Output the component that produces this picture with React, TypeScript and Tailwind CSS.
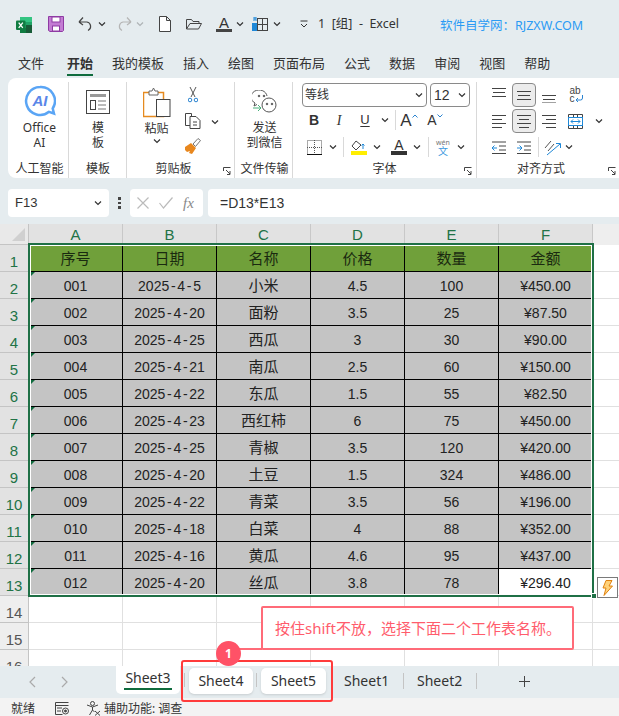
import { ReactNode } from "react"

const rows = [
  ["001", "2025-4-5", "小米", "4.5", "100", "¥450.00"],
  ["002", "2025-4-20", "面粉", "3.5", "25", "¥87.50"],
  ["003", "2025-4-25", "西瓜", "3", "30", "¥90.00"],
  ["004", "2025-4-21", "南瓜", "2.5", "60", "¥150.00"],
  ["005", "2025-4-22", "东瓜", "1.5", "55", "¥82.50"],
  ["006", "2025-4-23", "西红柿", "6", "75", "¥450.00"],
  ["007", "2025-4-25", "青椒", "3.5", "120", "¥420.00"],
  ["008", "2025-4-20", "土豆", "1.5", "324", "¥486.00"],
  ["009", "2025-4-22", "青菜", "3.5", "56", "¥196.00"],
  ["010", "2025-4-18", "白菜", "4", "88", "¥352.00"],
  ["011", "2025-4-16", "黄瓜", "4.6", "95", "¥437.00"],
  ["012", "2025-4-20", "丝瓜", "3.8", "78", "¥296.40"],
]

const heads = ["序号", "日期", "名称", "价格", "数量", "金额"]
const tabs = ["文件", "开始", "我的模板", "插入", "绘图", "页面布局", "公式", "数据", "审阅", "视图", "帮助"]

function Chev({ className = "" }: { className?: string }) {
  return (
    <svg width="8" height="6" viewBox="0 0 8 6" className={"shrink-0 " + className} fill="none" stroke="#333" strokeWidth="1.2">
      <path d="M1 1.5 4 4.5 7 1.5" />
    </svg>
  )
}

function Slot({ w, children }: { w: number; children: ReactNode }) {
  return (
    <div className="flex items-center justify-center shrink-0 h-full" style={{ width: w }}>
      {children}
    </div>
  )
}

function Lines({ kind }: { kind: "top" | "mid" | "bottom" | "left" | "center" | "right" }) {
  const sets: Record<string, [number, number, number][]> = {
    top: [[0, 14, 1], [1, 13, 5], [0, 14, 9]],
    mid: [[0, 14, 4], [1, 13, 8], [0, 14, 12]],
    bottom: [[0, 14, 8], [1, 13, 12], [0, 14, 15.5]],
    left: [[0, 14, 2], [0, 10, 6], [0, 14, 10], [0, 10, 14]],
    center: [[0, 14, 2], [2, 12, 6], [0, 14, 10], [2, 12, 14]],
    right: [[0, 14, 2], [4, 14, 6], [0, 14, 10], [4, 14, 14]],
  }
  return (
    <svg width="14" height="16" viewBox="0 0 14 16" stroke="#444" strokeWidth="1">
      {sets[kind].map(([a, b, y], i) => (
        <line key={i} x1={a} x2={b} y1={y + 0.5} y2={y + 0.5} />
      ))}
    </svg>
  )
}

function Launcher({ className = "" }: { className?: string }) {
  return (
    <svg width="8" height="8" viewBox="0 0 8 8" className={"absolute " + className} fill="none" stroke="#444" strokeWidth="1">
      <path d="M.5 4V.5H7.5M3 3l4 4M7 4v3.5H4" />
    </svg>
  )
}

function Group({ w, label, labelClass = "", children, last }: { w: number; label: string; labelClass?: string; children: ReactNode; last?: boolean }) {
  return (
    <div className={"relative flex flex-col shrink-0 h-full " + (last ? "" : "border-r border-[#d9d9d9]")} style={{ width: w }}>
      <div className="flex-1 min-h-0">{children}</div>
      <div className={"h-[17px] text-center text-[12px] leading-[16px] text-[#333] " + labelClass}>{label}</div>
    </div>
  )
}

function TitleBar() {
  return (
    <div className="flex items-center h-[48px] pl-[16px] text-[#333] shrink-0">
      <svg width="16" height="16" viewBox="0 0 16 16" className="mt-[1px]">
        <rect x="4" width="12" height="16" rx="1.5" fill="#21a366" />
        <rect x="4" width="12" height="5" fill="#33c481" />
        <rect x="10" y="8" width="6" height="8" fill="#185c37" />
        <rect x="4" y="11" width="6" height="5" fill="#107c41" />
        <rect y="3.5" width="9.5" height="9.5" rx="1" fill="#107c41" />
        <path d="M2.7 5.7 6.8 10.8M6.8 5.7 2.7 10.8" stroke="#fff" strokeWidth="1.3" />
      </svg>
      <svg width="16" height="16" viewBox="0 0 16 16" className="ml-[16px]" fill="none">
        <path d="M.5.5h15v14l-1 1H2l-1.500-1z" fill="#c37cd3" stroke="#8e3aa3" />
        <rect x="4" y="1" width="8" height="5" fill="#fff" stroke="#8e3aa3" />
        <rect x="4.500" y="10" width="7" height="5" fill="#fff" stroke="#8e3aa3" />
      </svg>
      <svg width="15" height="16" viewBox="0 0 15 16" className="ml-[14px]" fill="none" stroke="#444" strokeWidth="1.2">
        <path d="M1 6h8a4.500 4.500 0 0 1 1 8.500M1 6l4-4.500M1 6l4 3" />
      </svg>
      <Chev className="ml-[5px]" />
      <svg width="15" height="16" viewBox="0 0 15 16" className="ml-[11px]" fill="none" stroke="#b5b5b5" strokeWidth="1.2">
        <path d="M14 6H6a4.500 4.500 0 0 0-1 8.500M14 6l-4-4.500M14 6l-4 3" />
      </svg>
      <Chev className="ml-[4px] opacity-30" />
      <svg width="12" height="16" viewBox="0 0 12 16" className="ml-[15px]" fill="#fff" stroke="#444">
        <path d="M.5.5h7l4 4v11H.5zM7.500.5v4h4" />
      </svg>
      <svg width="16" height="12" viewBox="0 0 16 12" className="ml-[15px]" fill="none" stroke="#444">
        <path d="M.5 11V1.500h5l1.500 2h6v2M.5 11h12l3-5.500H4z" />
      </svg>
      <div className="ml-[14px] flex flex-col items-center w-[16px]">
        <span className="text-[15px] leading-[13px] font-['Liberation_Sans',sans-serif]">A</span>
        <span className="block h-[3px] w-[16px] bg-[#444]" />
      </div>
      <Chev className="ml-[4px]" />
      <svg width="16" height="14" viewBox="0 0 16 14" className="ml-[8px]" fill="none">
        <rect x="5.500" y="1.500" width="10" height="12" stroke="#444" />
        <path d="M10.500 1.500v12M5.500 7.500h10" stroke="#444" />
        <rect x="0" y="6" width="5" height="8" fill="#1e88d8" />
        <path d="M1 1h4M3 0v3M1 3h4" stroke="#1e88d8" />
      </svg>
      <Chev className="ml-[5px]" />
      <svg width="8" height="8" viewBox="0 0 8 8" className="ml-[19px]" fill="none" stroke="#333">
        <path d="M.5 1h7M1 4l3 3 3-3" />
      </svg>
      <span className="ml-[10px] text-[12.500px] whitespace-pre leading-none">1  [组]  -  Excel</span>
      <span className="ml-[41px] mt-[5px] text-[12.500px] text-[#2b9bf4] whitespace-nowrap leading-none">软件自学网：RJZXW.COM</span>
    </div>
  )
}

function MenuBar() {
  return (
    <div className="flex h-[30px] pl-[18px] gap-[19px] shrink-0">
      {tabs.map((t) => (
        <div key={t} className={"relative text-[13px] leading-[30px] text-[#333] whitespace-nowrap " + (t === "开始" ? "ml-[4px]" : "")}>
          <span className={t === "开始" ? "font-bold" : ""}>{t}</span>
          {t === "开始" && <span className="absolute left-0 right-0 bottom-[2px] h-[2px] bg-[#0f6b3d]" />}
        </div>
      ))}
    </div>
  )
}

function Ribbon() {
  return (
    <div className="ml-[8px] h-[100px] bg-white rounded-l-[8px] flex pt-[4px] shrink-0 text-[#333]">
      <Group w={61} label="人工智能" labelClass="pl-[3px]">
        <div className="flex flex-col items-center pt-[3px] pl-[3px]">
          <svg width="32" height="32" viewBox="0 0 32 32">
            <path d="M16 2a14 14 0 1 0 9 24.800l5 1.700-1.300-5A14 14 0 0 0 16 2z" fill="#fff" stroke="#5aa5f5" strokeWidth="2.500" />
            <text x="16" y="21" textAnchor="middle" fontSize="15" fontWeight="700" fontStyle="italic" fill="#5a86e8" fontFamily="Liberation Sans, sans-serif">AI</text>
          </svg>
          <div className="text-[12px] leading-[15px] mt-[3px] text-center">Office<br />AI</div>
        </div>
      </Group>
      <Group w={58} label="模板" labelClass="pl-[1px]">
        <div className="flex flex-col items-center pt-[8px] pl-[1px]">
          <svg width="24" height="24" viewBox="0 0 24 24" fill="none" stroke="#444">
            <rect x=".5" y=".5" width="23" height="23" />
            <rect x="4" y="4" width="16" height="3" fill="#999" stroke="none" />
            <rect x="4.500" y="10.500" width="5" height="9" />
            <path d="M12 11h8M12 15h8M12 19h8" stroke="#777" />
          </svg>
          <div className="text-[12px] leading-[15px] mt-[6px] text-center">模<br />板</div>
        </div>
      </Group>
      <Group w={108} label="剪贴板" labelClass="pr-[14px]">
        <div className="flex h-full">
          <div className="flex flex-col items-center w-[54px] pt-[5px] pl-[5px]">
            <svg width="28" height="31" viewBox="0 0 28 31" fill="none">
              <rect x=".5" y="5.500" width="20" height="24" fill="#fff" stroke="#e58a1f" strokeWidth="1.500" />
              <path d="M6 8V4h3l1.500-3 1.500 3h3v4z" fill="#fff" stroke="#666" />
              <rect x="13.500" y="12.500" width="13.500" height="17" fill="#fff" stroke="#444" />
            </svg>
            <div className="text-[12px] leading-[15px] mt-[3px]">粘贴</div>
            <Chev className="mt-[2px]" />
          </div>
          <div className="flex flex-col items-center w-[24px]">
            <svg width="10" height="16" viewBox="0 0 10 16" fill="none" stroke="#555" className="mt-[5px]">
              <path d="M2 0l5 10M8 0 3 10" />
              <circle cx="2" cy="13" r="1.800" stroke="#2a83d0" />
              <circle cx="8" cy="13" r="1.800" stroke="#2a83d0" />
            </svg>
            <svg width="16" height="16" viewBox="0 0 16 16" fill="none" stroke="#444" className="mt-[10px]">
              <path d="M5 12.500H.5V.5h6v3M5 3.500h6l4 4v8H5z" />
              <path d="M8 9h4M8 12h4" />
            </svg>
            <svg width="16" height="16" viewBox="0 0 16 16" className="mt-[9px]">
              <path d="M0 9l6-4 5 5-4 6-3-1 1-2-3 1-2-2z" fill="#e8871e" />
              <path d="M8 6l5-5.500 2.500 2-5 6z" fill="#fff" stroke="#777" />
            </svg>
          </div>
          <div className="pt-[37px] pl-[6px]"><Chev /></div>
        </div>
        <Launcher className="right-[3px] bottom-[3px]" />
      </Group>
      <Group w={58} label="文件传输" labelClass="pl-[2px]">
        <div className="flex flex-col items-center pt-[8px] pl-[2px]">
          <svg width="26" height="24" viewBox="0 0 26 24" fill="none" stroke="#555">
            <path d="M15 6a8 7 0 1 0-12 7l-1 3 3-1.500" />
            <circle cx="17" cy="15" r="7" fill="#fff" />
            <circle cx="7" cy="6" r=".8" fill="#555" />
            <circle cx="12" cy="6" r=".8" fill="#555" />
            <circle cx="15" cy="14" r=".8" fill="#555" />
            <circle cx="20" cy="14" r=".8" fill="#555" />
            <path d="M1 18h8M6 15l3 3-3 3" stroke="#48b07a" />
          </svg>
          <div className="text-[12px] leading-[15px] mt-[6px] text-center whitespace-nowrap">发送<br />到微信</div>
        </div>
      </Group>
      <Group w={184} label="字体">
        <div className="flex flex-col pl-[9px] pt-[1px]">
          <div className="flex h-[24px] gap-[3px]">
            <div className="w-[125px] border border-[#8a8a8a] rounded-[4px] flex items-center justify-between pl-[2px] pr-[3px] text-[12px]">
              <span>等线</span><Chev />
            </div>
            <div className="w-[40px] border border-[#8a8a8a] rounded-[4px] flex items-center justify-between pl-[3px] pr-[3px] text-[14px] font-['Liberation_Sans',sans-serif]">
              <span>12</span><Chev />
            </div>
          </div>
          <div className="flex items-center h-[26px] font-['Liberation_Sans',sans-serif]">
            <Slot w={24}><b className="text-[14px]">B</b></Slot>
            <Slot w={26}><i className="text-[14px] font-['Liberation_Serif',serif]">I</i></Slot>
            <Slot w={26}><span className="text-[13px] underline underline-offset-2">U</span></Slot>
            <Slot w={14}><Chev /></Slot>
            <div className="w-px h-[20px] bg-[#d9d9d9] ml-[3px]" />
            <Slot w={26}>
              <span className="text-[17px] leading-none">A</span>
              <svg width="6" height="4" viewBox="0 0 6 4" fill="none" stroke="#2a83d0" className="mb-[8px]"><path d="M.5 3.500 3 1l2.500 2.500" /></svg>
            </Slot>
            <Slot w={26}>
              <span className="text-[14px] leading-none">A</span>
              <svg width="6" height="4" viewBox="0 0 6 4" fill="none" stroke="#2a83d0" className="mb-[8px]"><path d="M.5.500 3 3 5.500.5" /></svg>
            </Slot>
          </div>
          <div className="flex items-center h-[28px]">
            <Slot w={24}>
              <svg width="15" height="15" viewBox="0 0 15 15" fill="none" stroke="#555" strokeDasharray="1 1">
                <rect x=".5" y=".5" width="14" height="14" />
                <path d="M7.500 0v15M0 7.500h15" />
                <path d="M0 14.500h15" stroke="#111" strokeDasharray="none" />
              </svg>
            </Slot>
            <Slot w={14}><Chev /></Slot>
            <div className="w-px h-[20px] bg-[#d9d9d9] ml-[3px]" />
            <Slot w={29}>
              <div className="flex flex-col items-center">
                <svg width="15" height="11" viewBox="0 0 15 11" fill="none" stroke="#444">
                  <path d="M5 1 1 6l4 4 5-5z" />
                  <path d="M12 9V4M10.500 5.500 12 4l1.500 1.500" stroke="#1e88d8" />
                </svg>
                <span className="block w-[16px] h-[4px] bg-[#ffee00]" />
              </div>
            </Slot>
            <Slot w={8}><Chev /></Slot>
            <div className="ml-[9px] w-[18px] flex flex-col items-center">
              <span className="text-[14px] leading-[12px] font-['Liberation_Sans',sans-serif]">A</span>
              <span className="block w-[16px] h-[4px] bg-[#333]" />
            </div>
            <Slot w={18}><Chev /></Slot>
            <div className="w-px h-[20px] bg-[#d9d9d9] ml-[2px]" />
            <Slot w={28}>
              <div className="flex flex-col items-center leading-none">
                <span className="text-[7px] text-[#777]">wén</span>
                <span className="text-[10px] text-[#3d9ae0]">文</span>
              </div>
            </Slot>
            <Slot w={8}><Chev /></Slot>
          </div>
        </div>
        <Launcher className="right-[4px] bottom-[3px]" />
      </Group>
      <Group w={142} label="对齐方式" labelClass="pr-[14px]" last>
        <div className="flex flex-col pl-[12px] pt-[1px]">
          <div className="flex items-center h-[24px]">
            <Slot w={19}><Lines kind="top" /></Slot>
            <div className="ml-[4px] w-[24px] h-[24px] rounded-[4px] bg-[#ececec] border border-[#8a8a8a] flex items-center justify-center"><Lines kind="mid" /></div>
            <Slot w={26}><Lines kind="bottom" /></Slot>
            <Slot w={30}>
              <div className="flex flex-col w-[15px] text-[10px] leading-[8px] text-[#444] font-['Liberation_Sans',sans-serif]">
                <span>ab</span>
                <div className="flex items-center">
                  <span>c</span>
                  <svg width="9" height="8" viewBox="0 0 9 8" fill="none" stroke="#2a83d0"><path d="M7.500 0v3a2 2 0 0 1-2 2H1M3 3 1 5l2 2" /></svg>
                </div>
              </div>
            </Slot>
          </div>
          <div className="flex items-center h-[24px] mt-[2px]">
            <Slot w={19}><Lines kind="left" /></Slot>
            <div className="ml-[4px] w-[24px] h-[24px] rounded-[4px] bg-[#ececec] border border-[#8a8a8a] flex items-center justify-center"><Lines kind="center" /></div>
            <Slot w={26}><Lines kind="right" /></Slot>
            <Slot w={26}>
              <svg width="15" height="15" viewBox="0 0 15 15" fill="none">
                <path d="M.5.5h14v14H.5zM5.500 0v3M9.500 0v3M5.500 12v3M9.500 12v3" stroke="#444" />
                <rect x=".5" y="3.500" width="14" height="8" stroke="#1e88d8" fill="#fff" />
                <path d="M3 7.500h9M5 5.500l-2 2 2 2M10 5.500l2 2-2 2" stroke="#1e88d8" />
              </svg>
            </Slot>
            <Slot w={22}><Chev /></Slot>
          </div>
          <div className="flex items-center h-[28px]">
            <Slot w={19}>
              <svg width="15" height="13" viewBox="0 0 15 13" fill="none">
                <path d="M1 1h14M8 5h7M8 9h7M1 12.500h14" stroke="#444" />
                <path d="M6 7H1M3.500 4.500 1 7l2.500 2.500" stroke="#1e88d8" />
              </svg>
            </Slot>
            <Slot w={30}>
              <svg width="15" height="13" viewBox="0 0 15 13" fill="none">
                <path d="M1 1h14M8 5h7M8 9h7M1 12.500h14" stroke="#444" />
                <path d="M1 7h5M3.500 4.500 6 7 3.500 9.500" stroke="#1e88d8" />
              </svg>
            </Slot>
            <div className="w-px h-[20px] bg-[#d9d9d9]" />
            <Slot w={26}>
              <svg width="17" height="17" viewBox="0 0 17 17" fill="none">
                <path d="M1 9 7 2M4 12l6-7" stroke="#555" />
                <path d="M3 16 16 5M12 4.500h4.500V9" stroke="#1e88d8" />
              </svg>
            </Slot>
            <Slot w={8}><Chev /></Slot>
          </div>
        </div>
        <Launcher className="right-[3px] bottom-[3px]" />
      </Group>
    </div>
  )
}

function FormulaBar() {
  return (
    <div className="flex items-center h-[28px] mt-[11px] mb-[7px] pl-[8px] shrink-0 text-[#333]">
      <div className="w-[101px] h-full bg-white rounded-[4px] flex items-center justify-between pl-[7px] pr-[7px] text-[13px] font-['Liberation_Sans',sans-serif]">
        <span>F13</span>
        <Chev />
      </div>
      <div className="w-[21px] flex flex-col items-center gap-[2px]">
        <span className="block w-[2.500px] h-[2.500px] bg-[#444]" />
        <span className="block w-[2.500px] h-[2.500px] bg-[#444]" />
        <span className="block w-[2.500px] h-[2.500px] bg-[#444]" />
      </div>
      <div className="w-[73px] h-full bg-white rounded-[4px] flex items-center pl-[7px] gap-[10px]">
        <svg width="12" height="12" viewBox="0 0 12 12" stroke="#bbb" strokeWidth="1.200"><path d="M.5.5l11 11M11.500.5l-11 11" /></svg>
        <svg width="14" height="12" viewBox="0 0 14 12" stroke="#bbb" strokeWidth="1.200" fill="none"><path d="M.5 6l4 5L13.500.5" /></svg>
        <i className="text-[15px] leading-none text-[#888] font-['Liberation_Serif',serif]">fx</i>
      </div>
      <div className="ml-[5px] flex-1 h-full bg-white rounded-l-[4px] flex items-center pl-[12px] text-[14px] font-['Liberation_Sans',sans-serif]">
        =D13*E13
      </div>
    </div>
  )
}

// the sheet's font has a hyphen as wide as a digit
function DateText({ value }: { value: string }) {
  const parts = value.split("-")
  return (
    <span>
      {parts.map((p, i) => (
        <span key={i}>
          {i > 0 && <span className="mx-[1.700px]">-</span>}
          {p}
        </span>
      ))}
    </span>
  )
}

function Sheet() {
  return (
    <div className="relative h-[442px] overflow-hidden bg-white shrink-0 font-['Liberation_Sans','Noto_Sans_CJK_SC',sans-serif]">
      <div className="grid grid-cols-[29px_repeat(6,94px)_26px] auto-rows-[27px] grid-rows-[21px]">
        <div className="relative bg-[#e9e9e9] border-r border-b border-[#c4c4c4]">
          <span className="absolute right-[3px] bottom-[3px] w-0 h-0 border-l-[13px] border-l-transparent border-b-[13px] border-b-[#d0d0d0]" />
        </div>
        {["A", "B", "C", "D", "E", "F"].map((c) => (
          <div key={c} className="bg-[#e2e2e2] border-r border-[#c8c8c8] text-center text-[15px] leading-[22px] text-[#217346]">{c}</div>
        ))}
        <div className="bg-[#eeeeee]" />

        <div className="bg-[#e2e2e2] border-r border-b border-[#c4c4c4] text-center text-[15px] leading-[34px] text-[#217346]">1</div>
        {heads.map((h) => (
          <div key={h} className="bg-[#70a03a] border-r border-b border-black flex items-center justify-center pt-[2px] text-[15px] text-[#1a2a10]">{h}</div>
        ))}
        <div className="border-b border-[#e0e0e0]" />

        {rows.map((r, i) => (
          <div key={r[0]} className="contents">
            <div className="bg-[#e2e2e2] border-r border-b border-[#c4c4c4] text-center text-[15px] leading-[34px] text-[#217346]">{i + 2}</div>
            {r.map((v, j) => {
              const active = i === 11 && j === 5
              return (
                <div key={j} className={"relative border-r border-b border-black flex items-center justify-center pt-[2px] text-[#222] " + (j === 2 ? "text-[15px] " : "text-[14px] ") + (active ? "bg-white" : "bg-[#c4c4c4]")}>
                  {j === 0 && <span className="absolute left-0 top-0 w-0 h-0 border-t-[6px] border-t-[#0f6b3d] border-r-[6px] border-r-transparent" />}
                  {j === 1 ? <DateText value={v} /> : v}
                </div>
              )
            })}
            <div className="border-b border-[#e0e0e0]" />
          </div>
        ))}

        {[14, 15, 16].map((n) => (
          <div key={n} className="contents">
            <div className="bg-[#eeeeee] border-r border-b border-[#c4c4c4] text-center text-[15px] leading-[34px] text-[#555]">{n}</div>
            {[0, 1, 2, 3, 4, 5].map((k) => (
              <div key={k} className="border-r border-b border-[#e0e0e0]" />
            ))}
            <div className="border-b border-[#e0e0e0]" />
          </div>
        ))}
      </div>

      {/* selection outline */}
      <div className="absolute left-[28px] top-[19px] w-[566px] h-[354px] border-2 border-[#1f7046] shadow-[inset_0_0_0_1px_white] pointer-events-none" />
      <div className="absolute left-[591px] top-[369px] w-[6px] h-[6px] bg-[#1f7046] border border-white" />
      <div className="absolute left-[597px] top-[353px] w-[21px] h-[21px] bg-white border border-[#7a7a7a] flex items-center justify-center">
        <svg width="11" height="16" viewBox="0 0 11 16" fill="#ffd27a" stroke="#e0820f"><path d="M4 .5h6L7 6h3.500L2 15.500 4 8H1z" /></svg>
      </div>
    </div>
  )
}

function SheetTabs() {
  return (
    <div className="relative flex items-start h-[32px] bg-[#e5ecef] shrink-0 text-[14px] text-[#333] rounded-t-[3px]">
      <svg width="8" height="12" viewBox="0 0 8 12" fill="none" stroke="#aaa" strokeWidth="1.200" className="ml-[28px] mt-[10px]"><path d="M7 1 2 6l5 5" /></svg>
      <svg width="8" height="12" viewBox="0 0 8 12" fill="none" stroke="#aaa" strokeWidth="1.200" className="ml-[25px] mt-[10px]"><path d="M1 1l5 5-5 5" /></svg>
      <div className="relative ml-[47px] w-[64px] h-[28px] bg-white rounded-b-[5px] text-center leading-[24px]">
        Sheet3
        <span className="absolute left-[8px] right-[8px] bottom-[4px] h-[2px] bg-[#0f6b3d]" />
      </div>
      <span className="ml-[4px] mt-[7px] w-px h-[14px] bg-[#c4c4c4]" />
      <div className="ml-[4px] mt-[2px] w-[64px] h-[26px] bg-white rounded-[5px] text-center leading-[26px] shadow-sm">Sheet4</div>
      <span className="ml-[3px] mt-[7px] w-px h-[14px] bg-[#c4c4c4]" />
      <div className="ml-[4px] mt-[2px] w-[65px] h-[26px] bg-white rounded-[5px] text-center leading-[26px] shadow-sm">Sheet5</div>
      <div className="ml-[18px] w-[44px] text-center leading-[30px]">Sheet1</div>
      <span className="ml-[15px] mt-[7px] w-px h-[16px] bg-[#c4c4c4]" />
      <div className="ml-[13px] w-[45px] text-center leading-[30px]">Sheet2</div>
      <span className="ml-[14px] mt-[7px] w-px h-[16px] bg-[#c4c4c4]" />
      <svg width="11" height="11" viewBox="0 0 11 11" stroke="#444" className="ml-[42px] mt-[10px]"><path d="M5.500 0v11M0 5.500h11" /></svg>
    </div>
  )
}

function StatusBar() {
  return (
    <div className="flex items-center h-[18px] bg-[#f3f3f3] pl-[11px] pt-[3px] text-[12px] text-[#333] shrink-0">
      <span>就绪</span>
      <svg width="14" height="13" viewBox="0 0 14 13" fill="none" stroke="#444" className="ml-[20px]">
        <path d="M.5.500h13M.5 3.500h13M2 6h5M2 9h4M.5.500v12h7" />
        <circle cx="10.500" cy="9" r="3" />
        <circle cx="10.500" cy="9" r="1" fill="#444" />
      </svg>
      <svg width="15" height="15" viewBox="0 0 15 15" fill="none" stroke="#444" className="ml-[17px]">
        <circle cx="6.500" cy="2.500" r="2" />
        <path d="M1 4l5.500 2L12 4M6.500 6v3l-3 5M6.500 9l2 2M9 10l5 4.500M14 10l-5 4.500" />
      </svg>
      <span className="ml-[3px]">辅助功能: 调查</span>
    </div>
  )
}

export default function App() {
  return (
    <div className="relative w-[619px] h-[716px] overflow-hidden bg-[#e5ecef] flex flex-col font-['Noto_Sans','Noto_Sans_CJK_SC',sans-serif]">
      <TitleBar />
      <MenuBar />
      <Ribbon />
      <FormulaBar />
      <Sheet />
      <SheetTabs />
      <StatusBar />

      {/* annotations */}
      <div className="absolute left-[261px] top-[606px] w-[313px] h-[44px] bg-white border-2 border-[#ff6b78] rounded-[2px] flex items-center pl-[12px] text-[15px] text-[#ff5c6c] whitespace-nowrap">
        按住shift不放，选择下面二个工作表名称。
      </div>
      <div className="absolute left-[236px] top-[648px] w-[26px] h-[2px] bg-[#ff6b78]" />
      <div className="absolute left-[181px] top-[660px] w-[152px] h-[42px] border-2 border-[#ff3b3b] rounded-[3px]" />
      <div className="absolute left-[216px] top-[641px] w-[25px] h-[25px] rounded-full bg-[#ff5267] text-white text-[12px] font-bold flex items-center justify-center">1</div>
    </div>
  )
}
